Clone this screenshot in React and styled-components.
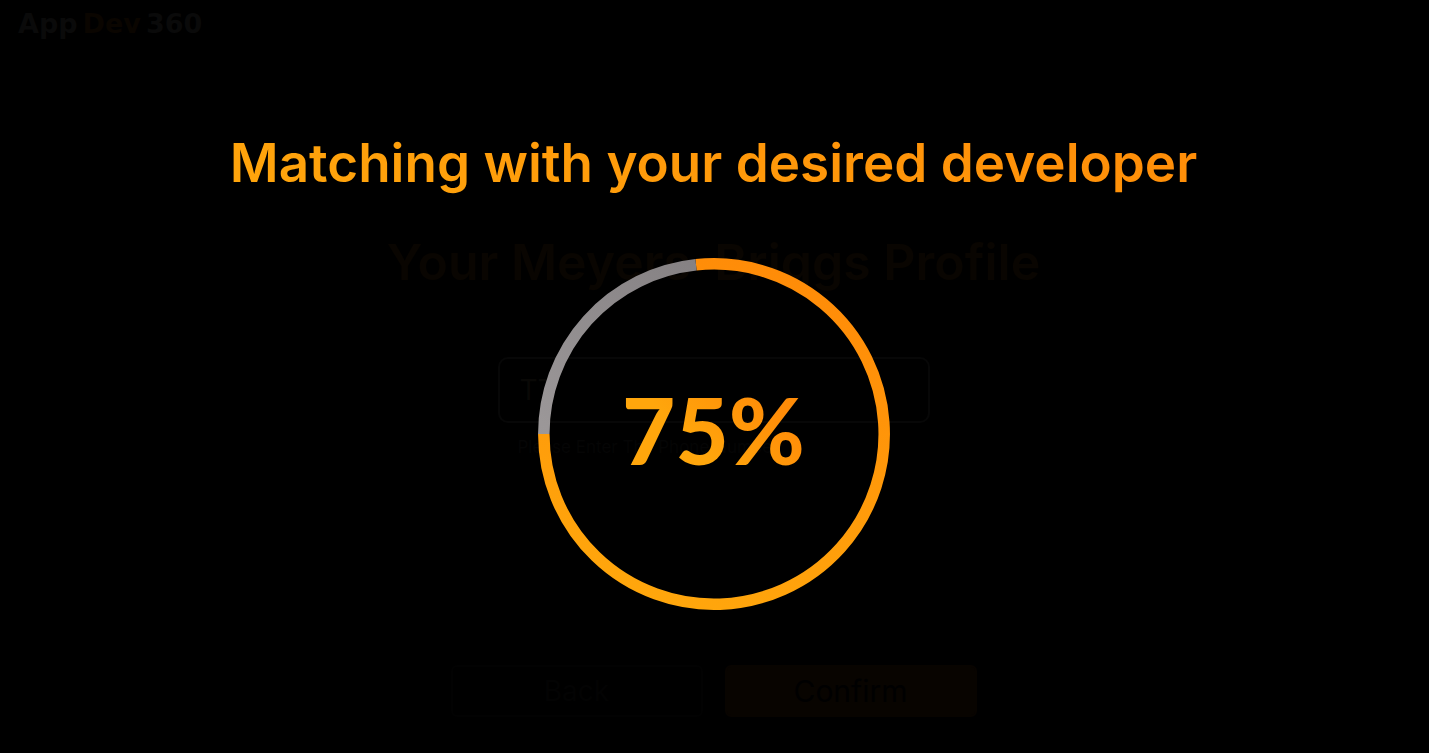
import React from "react";
import styled, { createGlobalStyle } from "styled-components";

const GlobalStyle = createGlobalStyle`
  * { box-sizing: border-box; }
  body { margin: 0; background: #000; font-family: Inter, "Liberation Sans", sans-serif; }
`;

const Page = styled.div`
  position: relative;
  min-height: 100vh;
  overflow: hidden;
`;

const Profile = styled.div`
  min-height: 100vh;
  display: flex;
  flex-direction: column;
  align-items: center;
  padding-right: 2px;
`;

const Header = styled.header`
  align-self: stretch;
  padding: 8px 18px;
`;

const Logo = styled.a`
  display: inline-flex;
  gap: 5px;
  font: 700 27px/32px "DejaVu Sans", sans-serif;
  color: #0a0a0a;
  text-decoration: none;
`;

const LogoAccent = styled.span`
  color: #0a0500;
`;

const Title = styled.h2`
  margin: 184px 0 0;
  font-size: 50px;
  line-height: 60px;
  font-weight: 600;
  color: #090501;
`;

const Field = styled.div`
  width: 432px;
  max-width: 90%;
  margin-top: 65px;
  display: flex;
  flex-direction: column;
`;

const TypeInput = styled.input`
  height: 66px;
  padding: 0 20px;
  border: 2px solid #070707;
  border-radius: 10px;
  background: transparent;
  color: #090806;
  font: 400 28px Inter, sans-serif;
`;

const Hint = styled.label`
  margin-top: 12px;
  padding-left: 20px;
  font-size: 17px;
  line-height: 24px;
  color: #050505;
`;

const Actions = styled.div`
  display: flex;
  gap: 22px;
  margin-top: 206px;
`;

const ActionButton = styled.button`
  width: 252px;
  height: 52px;
  border: 2px solid ${(p) => (p.$primary ? "#080400" : "#020202")};
  border-radius: 6px;
  background: ${(p) => (p.$primary ? "#080400" : "transparent")};
  color: ${(p) => (p.$primary ? "#000" : "#030303")};
  font: 400 ${(p) => (p.$primary ? 30 : 28)}px Inter, sans-serif;
`;

const Overlay = styled.section`
  position: absolute;
  inset: 0;
  display: flex;
  flex-direction: column;
  align-items: center;
  padding: 131px 2px 0 0;
`;

const Message = styled.h1`
  margin: 0;
  font-size: 53px;
  line-height: 64px;
  font-weight: 600;
  color: transparent;
  background: linear-gradient(20deg, #ffa60c, #ff8c08);
  background-clip: text;
`;

const Progress = styled.div`
  display: grid;
  place-items: center;
  width: 352px;
  margin-top: 63px;
  & > * { grid-area: 1 / 1; }
`;

const Percent = styled.strong`
  padding-bottom: 8px;
  font-family: Lato, sans-serif;
  font-size: 92px;
  line-height: 112px;
  font-weight: 900;
  color: transparent;
  background: linear-gradient(45deg, #ffa60c 40%, #ff8c08 80%);
  background-clip: text;
`;

function Ring() {
  return (
    <svg width="352" height="352" viewBox="0 0 352 352" fill="none" strokeWidth="11.5" aria-hidden="true">
      <defs>
        <linearGradient id="ring" x1="120" y1="340" x2="230" y2="10" gradientUnits="userSpaceOnUse">
          <stop stopColor="#ffa60c" />
          <stop offset="1" stopColor="#ff8c08" />
        </linearGradient>
        <linearGradient id="track" x1="0" y1="176" x2="158" y2="0" gradientUnits="userSpaceOnUse">
          <stop stopColor="#9c9899" />
          <stop offset="1" stopColor="#858183" />
        </linearGradient>
      </defs>
      <path d="M158 6.8A170.2 170.2 0 1 1 5.8 176" stroke="url(#ring)" />
      <path d="M5.8 176A170.2 170.2 0 0 1 158 6.8" stroke="url(#track)" />
    </svg>
  );
}

export default function App() {
  return (
    <Page>
      <GlobalStyle />
      <Profile>
        <Header>
          <Logo href="#">
            <span>App</span>
            <LogoAccent>Dev</LogoAccent>
            <span>360</span>
          </Logo>
        </Header>
        <Title>Your Meyers-Briggs Profile</Title>
        <Field>
          <TypeInput id="profile-type" defaultValue="TT" />
          <Hint htmlFor="profile-type">Please Enter The Phone Number</Hint>
        </Field>
        <Actions>
          <ActionButton type="button">Back</ActionButton>
          <ActionButton type="button" $primary>Confirm</ActionButton>
        </Actions>
      </Profile>
      <Overlay aria-live="polite">
        <Message>Matching with your desired developer</Message>
        <Progress>
          <Ring />
          <Percent>75%</Percent>
        </Progress>
      </Overlay>
    </Page>
  );
}
